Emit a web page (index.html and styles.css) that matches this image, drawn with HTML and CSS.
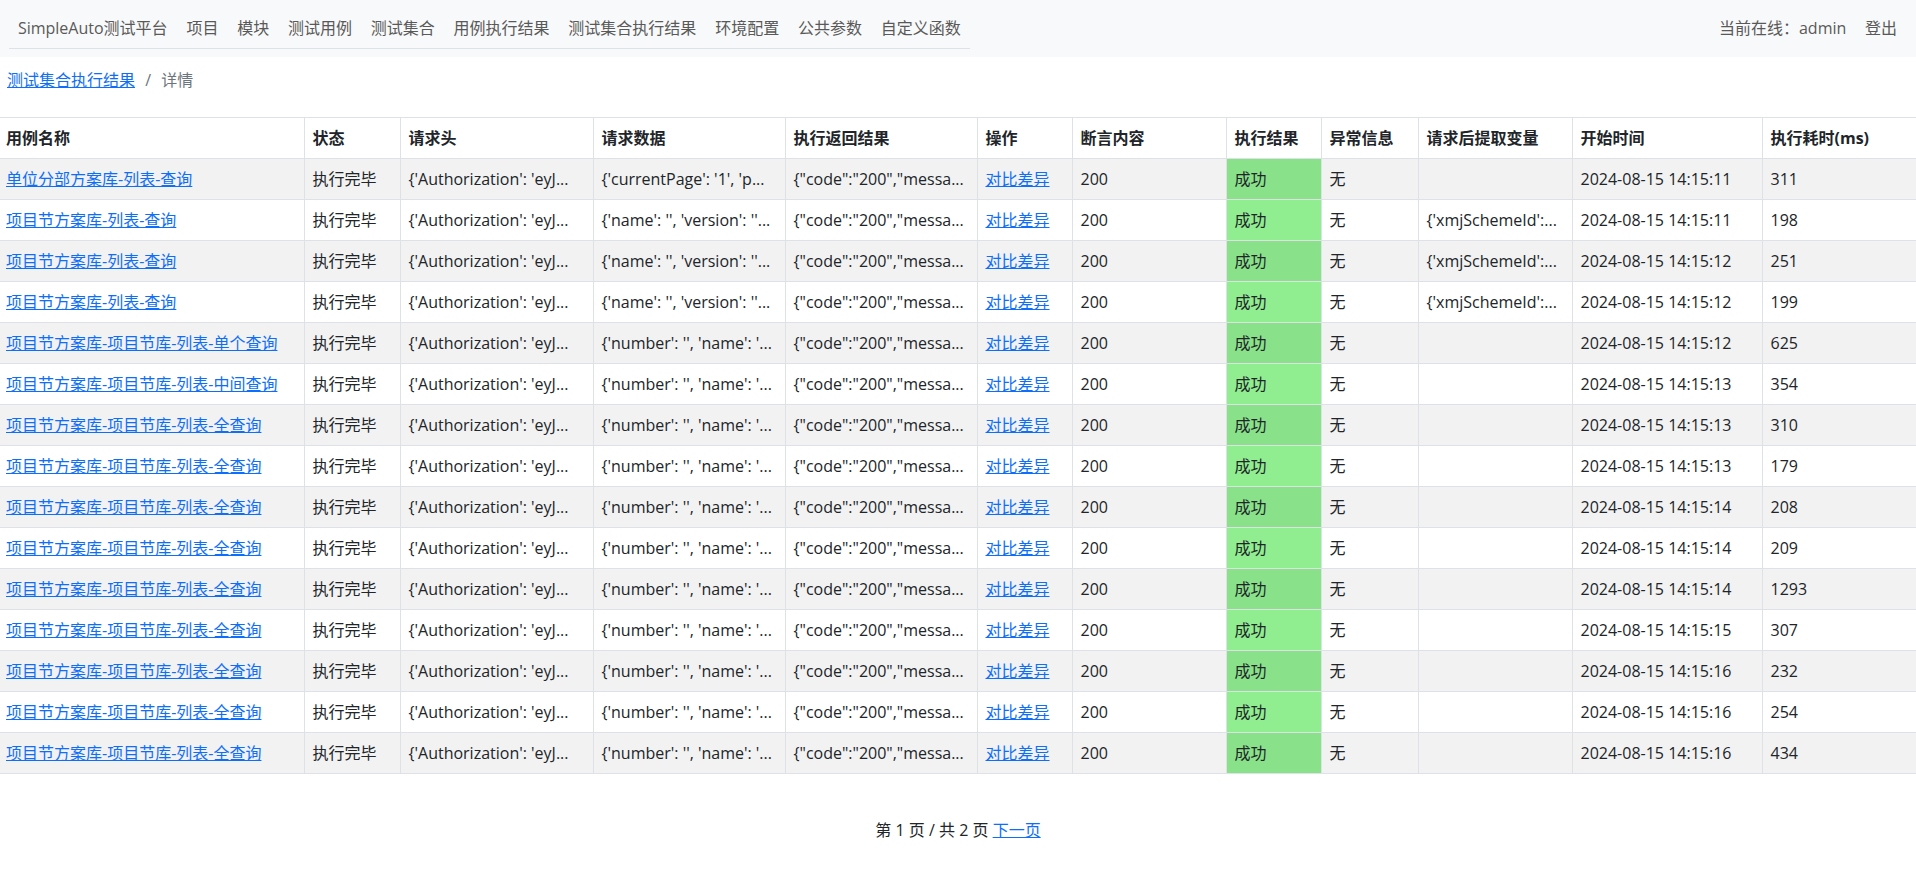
FILE: index.html
```html
<!DOCTYPE html>
<html lang="zh-CN">
<head>
  <meta charset="UTF-8" />
  <meta name="viewport" content="width=device-width, initial-scale=1.0"/>
  <title>测试集合执行结果 | 详情</title>
  <link rel="stylesheet" href="styles.css">
</head>
<body>

  <div class="navbar">
    <ul class="nav-left">
      <li><a class="nav-link" href="#">SimpleAuto测试平台</a></li>
      <li><a class="nav-link" href="#">项目</a></li>
      <li><a class="nav-link" href="#">模块</a></li>
      <li><a class="nav-link" href="#">测试用例</a></li>
      <li><a class="nav-link" href="#">测试集合</a></li>
      <li><a class="nav-link" href="#">用例执行结果</a></li>
      <li><a class="nav-link" href="#">测试集合执行结果</a></li>
      <li><a class="nav-link" href="#">环境配置</a></li>
      <li><a class="nav-link" href="#">公共参数</a></li>
      <li><a class="nav-link" href="#">自定义函数</a></li>
    </ul>
    <ul class="nav-right">
      <li><span class="nav-link">当前在线：admin</span></li>
      <li><a class="nav-link" href="#">登出</a></li>
    </ul>
  </div>

  <div class="crumb">
    <a href="#">测试集合执行结果</a>
    <span class="crumb-sep">/</span>
    <span class="crumb-active">详情</span>
  </div>

  <div class="table-container">
    <table class="result-table">
      <colgroup>
        <col style="width:304px"><col style="width:96px"><col style="width:193px"><col style="width:192px">
        <col style="width:192px"><col style="width:95px"><col style="width:154px"><col style="width:95px">
        <col style="width:97px"><col style="width:154px"><col style="width:190px"><col style="width:154px">
      </colgroup>
      <thead>
        <tr>
          <th>用例名称</th>
          <th>状态</th>
          <th>请求头</th>
          <th>请求数据</th>
          <th>执行返回结果</th>
          <th>操作</th>
          <th>断言内容</th>
          <th>执行结果</th>
          <th>异常信息</th>
          <th>请求后提取变量</th>
          <th>开始时间</th>
          <th>执行耗时(ms)</th>
        </tr>
      </thead>
      <tbody id="resultBody"></tbody>
    </table>
  </div>

  <div class="pagination">
    第 1 页 / 共 2 页 <a href="#">下一页</a>
  </div>

<script>
  const HEADER = "{'Authorization': 'eyJ...";
  const RESP = '{"code":"200","messa...';
  const NAME_Q = "{'name': '', 'version': ''...";
  const NUM_Q = "{'number': '', 'name': '...";
  const VAR = "{'xmjSchemeId':...";

  const rows = [
    ["单位分部方案库-列表-查询", "{'currentPage': '1', 'p...", "", "14:15:11", 311],
    ["项目节方案库-列表-查询", NAME_Q, VAR, "14:15:11", 198],
    ["项目节方案库-列表-查询", NAME_Q, VAR, "14:15:12", 251],
    ["项目节方案库-列表-查询", NAME_Q, VAR, "14:15:12", 199],
    ["项目节方案库-项目节库-列表-单个查询", NUM_Q, "", "14:15:12", 625],
    ["项目节方案库-项目节库-列表-中间查询", NUM_Q, "", "14:15:13", 354],
    ["项目节方案库-项目节库-列表-全查询", NUM_Q, "", "14:15:13", 310],
    ["项目节方案库-项目节库-列表-全查询", NUM_Q, "", "14:15:13", 179],
    ["项目节方案库-项目节库-列表-全查询", NUM_Q, "", "14:15:14", 208],
    ["项目节方案库-项目节库-列表-全查询", NUM_Q, "", "14:15:14", 209],
    ["项目节方案库-项目节库-列表-全查询", NUM_Q, "", "14:15:14", 1293],
    ["项目节方案库-项目节库-列表-全查询", NUM_Q, "", "14:15:15", 307],
    ["项目节方案库-项目节库-列表-全查询", NUM_Q, "", "14:15:16", 232],
    ["项目节方案库-项目节库-列表-全查询", NUM_Q, "", "14:15:16", 254],
    ["项目节方案库-项目节库-列表-全查询", NUM_Q, "", "14:15:16", 434]
  ];

  function esc(s) {
    return s.replace(/&/g, "&amp;").replace(/</g, "&lt;").replace(/"/g, "&quot;");
  }

  document.getElementById("resultBody").innerHTML = rows.map(r => `
    <tr>
      <td><a href="#">${r[0]}</a></td>
      <td>执行完毕</td>
      <td>${esc(HEADER)}</td>
      <td>${esc(r[1])}</td>
      <td>${esc(RESP)}</td>
      <td><a href="#">对比差异</a></td>
      <td>200</td>
      <td class="ok-cell">成功</td>
      <td>无</td>
      <td>${esc(r[2])}</td>
      <td>2024-08-15 ${r[3]}</td>
      <td>${r[4]}</td>
    </tr>
  `).join("");
</script>

</body>
</html>
```

FILE: styles.css
```css
body {
  font-family: "Open Sans", "Noto Sans CJK SC", sans-serif;
  font-size: 16px;
  line-height: 24px;
  margin: 0;
  color: #212529;
  background: #fff;
}

a {
  color: #0d6efd;
  text-decoration: underline;
}

.navbar {
  display: flex;
  justify-content: space-between;
  align-items: flex-start;
  background: #f8f9fa;
  padding: 8px 9.5px 8px 8.5px;
}

.navbar ul {
  display: flex;
  list-style: none;
  margin: 0;
  padding: 0;
}

.nav-left {
  border-bottom: 1px solid #dee2e6;
}

.nav-link {
  display: block;
  padding: 8px 9.4px;
  color: #595959;
  text-decoration: none;
}

.crumb {
  margin: 11px 0 25px;
  padding-left: 7px;
}

.crumb-sep {
  color: #6c757d;
  padding: 0 6px 0 6px;
}

.crumb-active {
  color: #6c757d;
}

.table-container {
  width: 100%;
  overflow-x: auto;
}

.result-table {
  width: 100%;
  table-layout: fixed;
  border-collapse: collapse;
}

.result-table th,
.result-table td {
  padding: 8px;
  text-align: left;
  white-space: nowrap;
  overflow: hidden;
  text-overflow: ellipsis;
  border-top: 1px solid #dee2e6;
  border-bottom: 1px solid #dee2e6;
  border-left: 1px solid #dee2e6;
}

.result-table th:first-child,
.result-table td:first-child {
  border-left: none;
  padding-left: 6px;
}

.result-table th {
  font-weight: 700;
  background: #fff;
}

.result-table tbody tr:nth-child(odd) td {
  background: #f2f2f2;
}

.result-table tbody tr td.ok-cell {
  background: #90ee90;
}

.result-table tbody tr:nth-child(odd) td.ok-cell {
  background: #89e289;
}

.pagination {
  text-align: center;
  margin-top: 44px;
}
```
